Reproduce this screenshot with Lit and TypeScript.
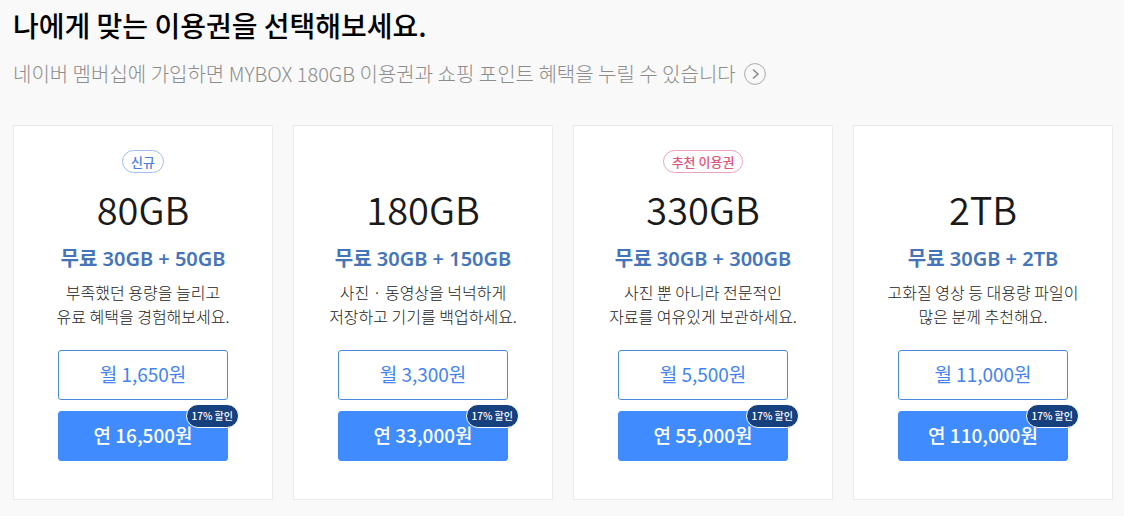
import { LitElement, html, css, nothing } from "lit";
import { customElement, property } from "lit/decorators.js";

interface Plan {
  size: string;
  formula: string;
  lines: [string, string];
  monthly: string;
  yearly: string;
  badge?: string;
  tone?: string;
}

const PLANS: Plan[] = [
  { size: "80GB", formula: "무료 30GB + 50GB", lines: ["부족했던 용량을 늘리고", "유료 혜택을 경험해보세요."], monthly: "월 1,650원", yearly: "연 16,500원", badge: "신규", tone: "new" },
  { size: "180GB", formula: "무료 30GB + 150GB", lines: ["사진 · 동영상을 넉넉하게", "저장하고 기기를 백업하세요."], monthly: "월 3,300원", yearly: "연 33,000원" },
  { size: "330GB", formula: "무료 30GB + 300GB", lines: ["사진 뿐 아니라 전문적인", "자료를 여유있게 보관하세요."], monthly: "월 5,500원", yearly: "연 55,000원", badge: "추천 이용권", tone: "pick" },
  { size: "2TB", formula: "무료 30GB + 2TB", lines: ["고화질 영상 등 대용량 파일이", "많은 분께 추천해요."], monthly: "월 11,000원", yearly: "연 110,000원" },
];

@customElement("plan-card")
export class PlanCard extends LitElement {
  @property({ attribute: false }) plan!: Plan;

  static styles = css`
    :host { display: block; }
    .card {
      box-sizing: border-box;
      height: 100%;
      display: flex;
      flex-direction: column;
      align-items: center;
      padding: 24px 8px 38px;
      background: #fff;
      border: 1px solid #ebebeb;
      text-align: center;
    }
    .tag-row { height: 24px; }
    .tag {
      display: block;
      box-sizing: border-box;
      height: 23px;
      padding: 0 8px;
      border: 1px solid;
      border-radius: 12px;
      font-size: 13px;
      font-weight: 500;
      line-height: 21px;
    }
    .new { color: #4a80dc; border-color: #9dc0f0; }
    .pick { color: #e0557c; border-color: #f0a3b8; }
    .size {
      margin: 11px 0 0;
      font-size: 38px;
      line-height: 48px;
      font-weight: 350;
      color: #1a1a1a;
    }
    .formula {
      margin: 14px 0 0;
      font: 600 20px/24px "Noto Sans", "Noto Sans CJK KR", sans-serif;
      color: #4674b8;
    }
    .desc { margin: 9px 0 0; font-size: 16px; line-height: 24px; font-weight: 300; color: #222; }
    .buttons { display: grid; gap: 11px; width: 170px; margin-top: 22px; }
    button {
      box-sizing: border-box;
      position: relative;
      width: 100%;
      height: 50px;
      padding: 0 0 2px;
      border: 1px solid #408cff;
      border-radius: 3px;
      font-family: inherit;
      font-size: 19px;
      line-height: 46px;
      cursor: pointer;
    }
    .month { color: #4484f0; background: #fff; border-color: #4a8ae0; font-weight: 400; }
    .year { color: #fff; background: #408cff; font-weight: 500; }
    .sale {
      position: absolute;
      top: -8px;
      right: -12px;
      box-sizing: border-box;
      height: 24px;
      padding: 0 5px;
      border: 1px solid #fff;
      border-radius: 12px;
      background: #17407e;
      font-size: 10px;
      line-height: 22px;
    }
  `;

  render() {
    const p = this.plan;
    return html`
      <article class="card">
        <div class="tag-row">${p.badge ? html`<span class="tag ${p.tone}">${p.badge}</span>` : nothing}</div>
        <h2 class="size">${p.size}</h2>
        <p class="formula">${p.formula}</p>
        <p class="desc">${p.lines[0]}<br />${p.lines[1]}</p>
        <div class="buttons">
          <button class="month" type="button">${p.monthly}</button>
          <button class="year" type="button">${p.yearly}<span class="sale">17% 할인</span></button>
        </div>
      </article>
    `;
  }
}

@customElement("app-root")
export class AppRoot extends LitElement {
  static styles = css`
    :host {
      display: block;
      box-sizing: border-box;
      min-height: 100vh;
      padding: 5px 11px 16px 13px;
      background: #f9f9f9;
      font-family: "Noto Sans CJK KR", sans-serif;
    }
    h1 { margin: 0; font-size: 28px; line-height: 40px; font-weight: 500; color: #000; }
    .more {
      display: flex;
      align-items: center;
      gap: 8px;
      width: fit-content;
      margin-top: 13px;
      font-size: 20px;
      line-height: 32px;
      font-weight: 300;
      color: #8c8c8c;
      text-decoration: none;
    }
    .more svg { display: block; }
    .plans { display: grid; grid-template-columns: repeat(4, 1fr); gap: 20px; margin-top: 35px; }
  `;

  render() {
    return html`
      <h1>나에게 맞는 이용권을 선택해보세요.</h1>
      <a class="more" href="#membership">네이버 멤버십에 가입하면 MYBOX 180GB 이용권과 쇼핑 포인트 혜택을 누릴 수 있습니다
        <svg width="22" height="22" viewBox="0 0 22 22" fill="none" aria-hidden="true">
          <circle cx="11" cy="11" r="10.4" stroke="#aaa" /><path d="M9 6.5 14 11 9 15.5" stroke="#888" stroke-width="1.5" />
        </svg>
      </a>
      <main class="plans">${PLANS.map((p) => html`<plan-card .plan=${p}></plan-card>`)}</main>
    `;
  }
}
